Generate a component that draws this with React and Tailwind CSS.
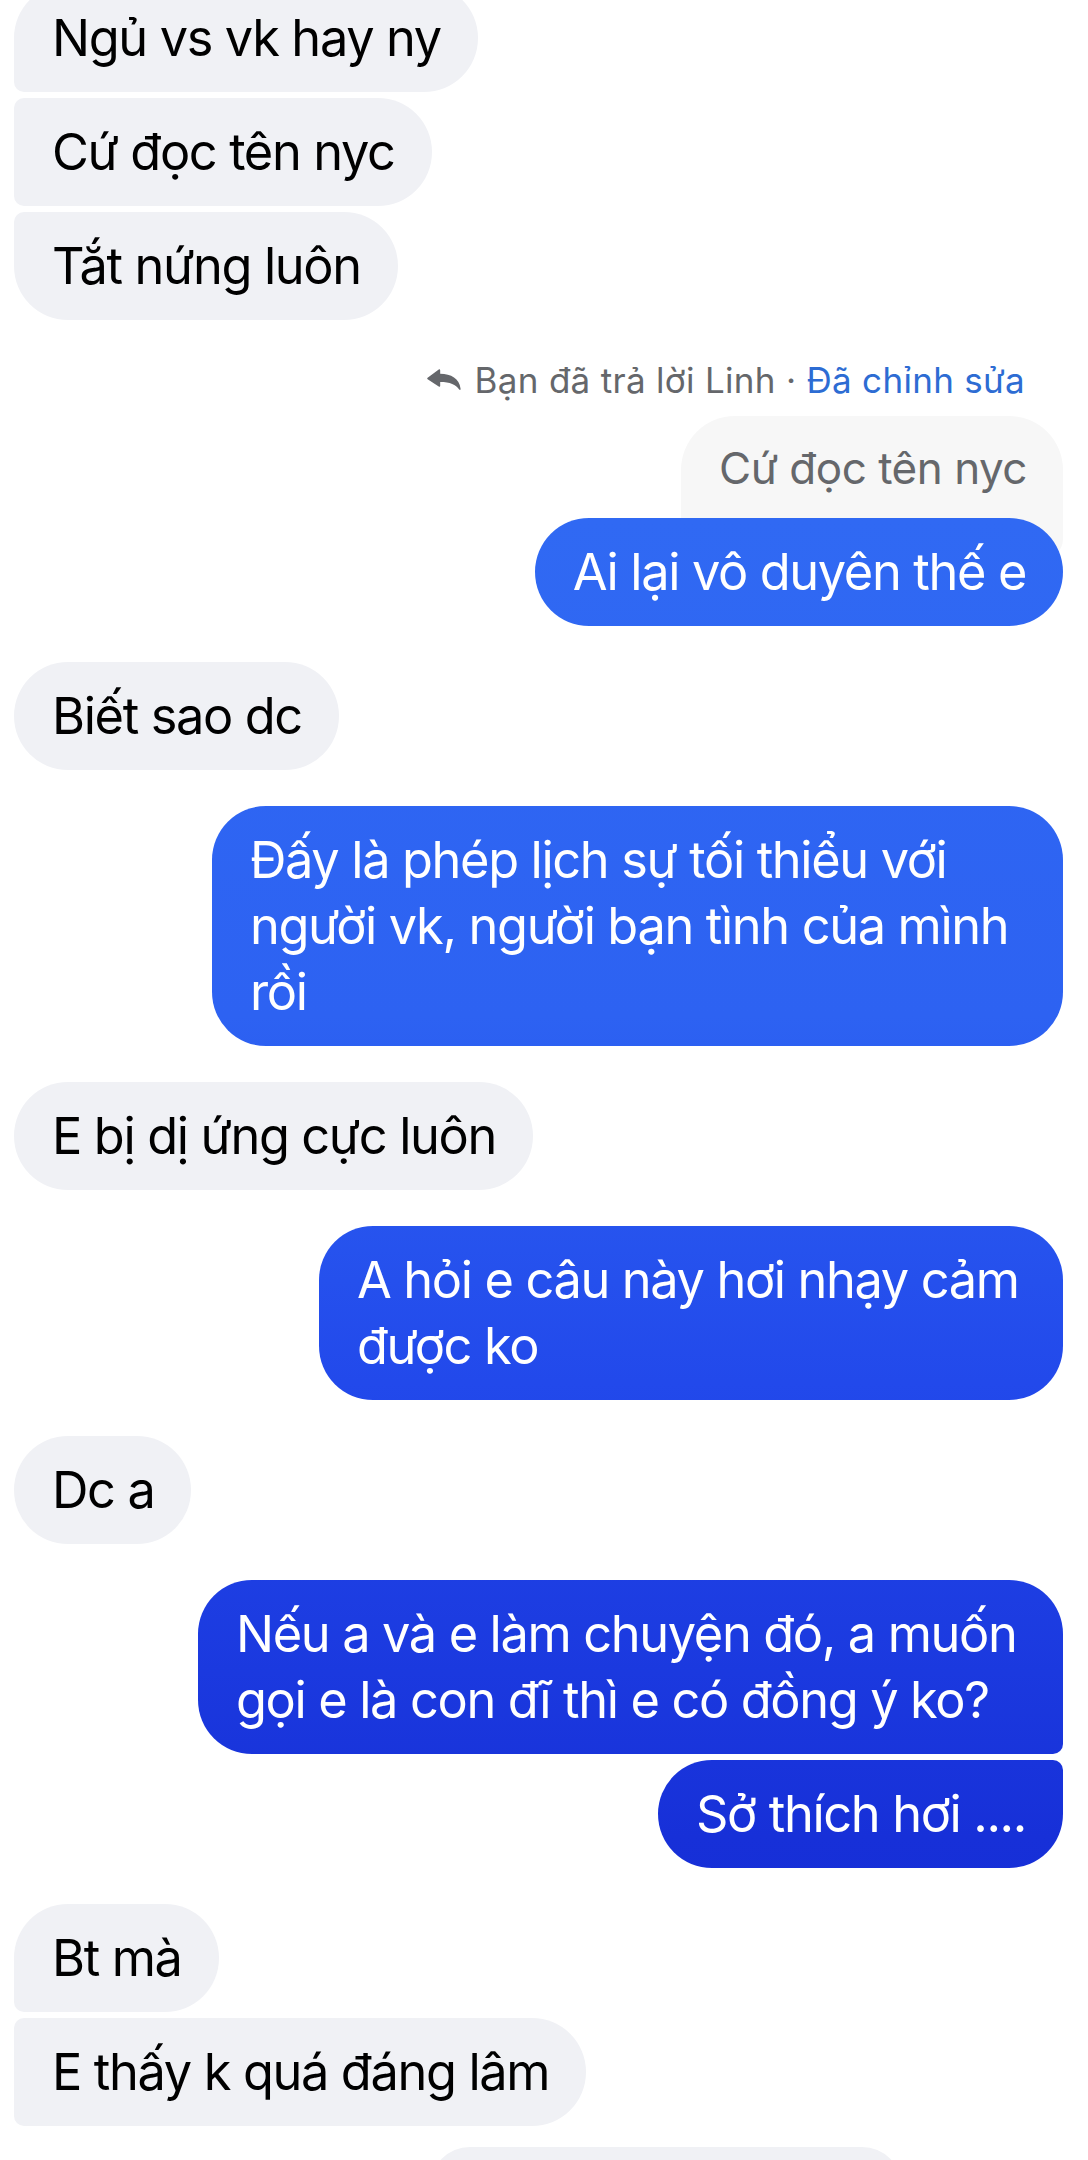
import React from "react";

const BLUE =
  "bg-[linear-gradient(180deg,#3671f5_0%,#3069f3_24%,#2d62f2_47%,#2249eb_64%,#1730d8_85%,#1329d3_100%)] bg-fixed text-white";
const GRAY = "bg-[#f0f1f5] text-black";
const TXT = "text-[50.5px] leading-[66px] tracking-[-1.35px] py-[21px] pl-[38px] pr-[37px] whitespace-nowrap";

function ReplyIcon() {
  return (
    <svg width="34" height="22" viewBox="0 0 33 21" className="shrink-0">
      <path
        d="M0.6 8.4 L11.4 0.4 Q12.8 -0.4 12.8 1.2 L12.8 4.4 C23.4 4.8 31.4 8.6 32.6 19 Q32.6 20.9 31.2 19.8 C28 14.8 22.4 12.4 12.8 12.4 L12.8 16 Q12.8 17.6 11.4 16.8 L0.6 9.8 Q-0.2 9.1 0.6 8.4 Z"
        fill="#65676b"
      />
    </svg>
  );
}

export default function App() {
  return (
    <div className="w-[1088px] h-[2160px] overflow-hidden bg-white font-['Inter',sans-serif]">
      <div className="flex flex-col mt-[-16px]">
        <div className="flex flex-col items-start ml-[14px] gap-[6px]">
          <div className={`${GRAY} ${TXT} rounded-[54px] rounded-bl-[10px]`}>Ngủ vs vk hay ny</div>
          <div className={`${GRAY} ${TXT} rounded-r-[54px] rounded-l-[10px]`}>Cứ đọc tên nyc</div>
          <div className={`${GRAY} ${TXT} rounded-[54px] rounded-tl-[10px]`}>Tắt nứng luôn</div>
        </div>

        <div className="self-end mr-[63px] mt-[39px] h-[42px] flex items-center gap-[14px] text-[35px] leading-[42px] tracking-[0.3px] text-[#65676b] whitespace-nowrap">
          <ReplyIcon />
          <span>
            Bạn đã trả lời Linh · <span className="text-[#2d6cd3]">Đã chỉnh sửa</span>
          </span>
        </div>

        <div className="flex flex-col items-end mr-[25px] mt-[15px]">
          <div className="bg-[#f7f7f7] text-[#65676b] rounded-t-[54px] rounded-b-[20px] h-[143px] pt-[26px] pl-[38px] pr-[36px] text-[44px] leading-[52px] tracking-[-0.5px] whitespace-nowrap">
            Cứ đọc tên nyc
          </div>
          <div className={`${BLUE} ${TXT} rounded-[54px] mt-[-41px] relative`}>Ai lại vô duyên thế e</div>
        </div>

        <div className="flex flex-col items-start ml-[14px] mt-[36px]">
          <div className={`${GRAY} ${TXT} rounded-[54px]`}>Biết sao dc</div>
        </div>

        <div className="flex flex-col items-end mr-[25px] mt-[36px]">
          <div className={`${BLUE} ${TXT} rounded-[54px] w-[851px]`}>
            Đấy là phép lịch sự tối thiểu với
            <br />
            người vk, người bạn tình của mình
            <br />
            rồi
          </div>
        </div>

        <div className="flex flex-col items-start ml-[14px] mt-[36px]">
          <div className={`${GRAY} ${TXT} rounded-[54px]`}>E bị dị ứng cực luôn</div>
        </div>

        <div className="flex flex-col items-end mr-[25px] mt-[36px]">
          <div className={`${BLUE} ${TXT} rounded-[54px] w-[744px]`}>
            A hỏi e câu này hơi nhạy cảm
            <br />
            được ko
          </div>
        </div>

        <div className="flex flex-col items-start ml-[14px] mt-[36px]">
          <div className={`${GRAY} ${TXT} rounded-[54px]`}>Dc a</div>
        </div>

        <div className="flex flex-col items-end mr-[25px] mt-[36px] gap-[6px]">
          <div className={`${BLUE} ${TXT} rounded-[54px] rounded-br-[10px] w-[865px]`}>
            Nếu a và e làm chuyện đó, a muốn
            <br />
            gọi e là con đĩ thì e có đồng ý ko?
          </div>
          <div className={`${BLUE} ${TXT} rounded-[54px] rounded-tr-[10px]`}>Sở thích hơi ....</div>
        </div>

        <div className="flex flex-col items-start ml-[14px] mt-[36px] gap-[6px]">
          <div className={`${GRAY} ${TXT} rounded-[54px] rounded-bl-[10px]`}>Bt mà</div>
          <div className={`${GRAY} ${TXT} rounded-[54px] rounded-tl-[10px] rounded-bl-[10px]`}>E thấy k quá đáng lâm</div>
        </div>

        <div className="flex mt-[21px]">
          <div className="ml-[430px] w-[472px] h-[60px] bg-[#f0f1f5] rounded-t-[40px]" />
        </div>
      </div>
    </div>
  );
}
